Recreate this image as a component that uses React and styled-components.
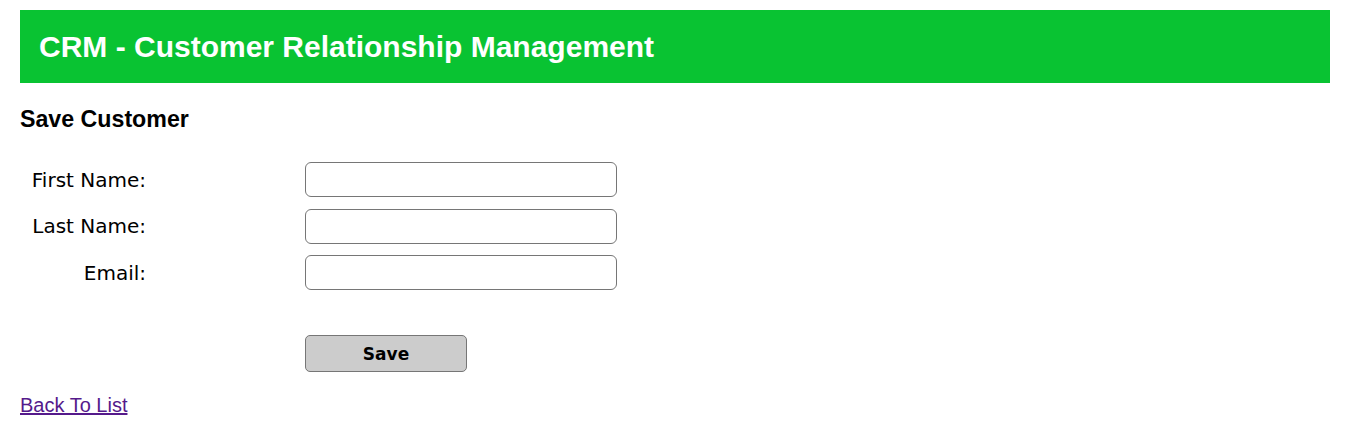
import React from 'react'
import styled, { createGlobalStyle } from 'styled-components'

const GlobalStyle = createGlobalStyle`
  body {
    margin: 10px 15px 0 20px;
    background: #fff;
    font-family: "Liberation Sans", Arial, sans-serif;
  }
`

const Header = styled.div`
  background: #09c332;
  height: 73px;
  display: flex;
  align-items: center;
  padding-left: 19px;
`

const Title = styled.h2`
  margin: 0;
  color: #fff;
  font-size: 30px;
  font-weight: bold;
`

const SubTitle = styled.h3`
  margin: 23px 0 0;
  font-size: 23.2px;
  font-weight: bold;
  color: #000;
`

const Form = styled.form`
  margin-top: 29px;
  display: grid;
  grid-template-columns: 126px 312px;
  column-gap: 159px;
  row-gap: 11.5px;
  align-items: center;
`

const Label = styled.label`
  font-family: "DejaVu Sans", sans-serif;
  font-size: 20px;
  text-align: right;
  color: #000;
`

const Field = styled.input`
  box-sizing: border-box;
  width: 312px;
  height: 35px;
  border: 1px solid #767676;
  border-radius: 6px;
  padding: 4px 6px;
  font-size: 19px;
`

const SaveButton = styled.button`
  grid-column: 2;
  margin-top: 33px;
  width: 162px;
  height: 37px;
  padding-top: 3px;
  background: #cccccc;
  border: 1px solid #767676;
  border-radius: 5px;
  font-family: "DejaVu Sans", sans-serif;
  font-weight: bold;
  font-size: 17px;
  color: #000;
`

const BackLink = styled.a`
  display: inline-block;
  margin-top: 22px;
  color: #551a8b;
  font-size: 20px;
  text-decoration: underline;
`

export default function App() {
  return (
    <>
      <GlobalStyle />
      <Header>
        <Title>CRM - Customer Relationship Management</Title>
      </Header>
      <SubTitle>Save Customer</SubTitle>
      <Form onSubmit={e => e.preventDefault()}>
        <Label>First Name:</Label>
        <Field type="text" />
        <Label>Last Name:</Label>
        <Field type="text" />
        <Label>Email:</Label>
        <Field type="text" />
        <SaveButton type="submit">Save</SaveButton>
      </Form>
      <BackLink href="#">Back To List</BackLink>
    </>
  )
}
